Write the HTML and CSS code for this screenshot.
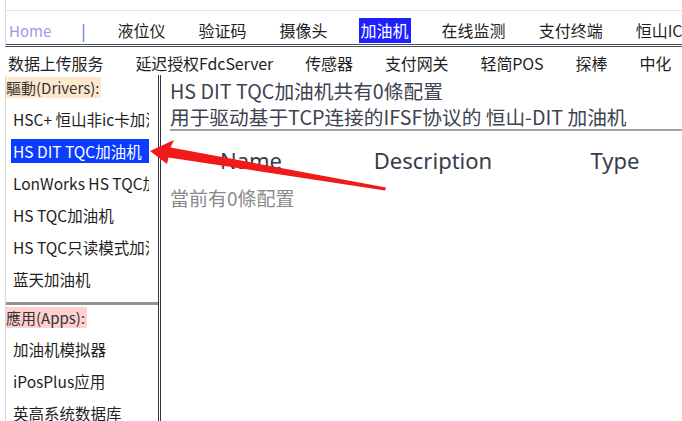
FILE: index.html
```html
<!DOCTYPE html>
<html lang="zh">
<head>
<meta charset="utf-8">
<title>加油机</title>
<link rel="stylesheet" href="styles.css">
</head>
<body>
<div class="page">
  <header class="top">
    <div class="top-strip"></div>
    <nav class="nav">
      <a class="nav-item home">Home</a>
      <span class="nav-item sep">|</span>
      <a class="nav-item">液位仪</a>
      <a class="nav-item">验证码</a>
      <a class="nav-item">摄像头</a>
      <a class="nav-item active">加油机</a>
      <a class="nav-item">在线监测</a>
      <a class="nav-item">支付终端</a>
      <a class="nav-item">恒山IC卡</a>
    </nav>
  </header>
  <nav class="subnav">
    <a class="sub-item">数据上传服务</a>
    <a class="sub-item">延迟授权FdcServer</a>
    <a class="sub-item">传感器</a>
    <a class="sub-item">支付网关</a>
    <a class="sub-item">轻简POS</a>
    <a class="sub-item">探棒</a>
    <a class="sub-item">中化</a>
  </nav>
  <div class="main">
    <aside class="sidebar">
      <section class="group">
        <div class="group-label drivers">驅動(Drivers):</div>
        <div class="side-item">HSC+ 恒山非ic卡加油机</div>
        <div class="side-item selected">HS DIT TQC加油机</div>
        <div class="side-item">LonWorks HS TQC加油机</div>
        <div class="side-item">HS TQC加油机</div>
        <div class="side-item">HS TQC只读模式加油机</div>
        <div class="side-item">蓝天加油机</div>
      </section>
      <section class="group apps-group">
        <div class="group-label apps">應用(Apps):</div>
        <div class="side-item">加油机模拟器</div>
        <div class="side-item">iPosPlus应用</div>
        <div class="side-item">英高系统数据库</div>
      </section>
    </aside>
    <section class="content">
      <div class="title">HS DIT TQC加油机共有0條配置</div>
      <div class="subtitle">用于驱动基于TCP连接的IFSF协议的 恒山-DIT 加油机</div>
      <div class="table-head">
        <div class="col">Name</div>
        <div class="col">Description</div>
        <div class="col">Type</div>
      </div>
      <div class="empty">當前有0條配置</div>
    </section>
  </div>
  <svg class="arrow" width="682" height="421" viewBox="0 0 682 421">
    <polygon points="150,151 174,140 170.5,147.5 386,187.5 385,190.5 168.5,157.5 167,164" fill="#f01a1a"/>
  </svg>
</div>
</body>
</html>
```

FILE: styles.css
```css
html, body {
  margin: 0;
  padding: 0;
  background: #ffffff;
}

body {
  font-family: "Noto Sans CJK SC", "Noto Sans", sans-serif;
  font-size: 16px;
  color: #222;
  overflow: hidden;
  width: 682px;
  height: 421px;
}

.page {
  position: relative;
  width: 682px;
  height: 421px;
  display: flex;
  flex-direction: column;
}

.top {
  margin-left: 5px;
  border-left: 1px solid #dcdcdc;
  border-bottom: 3px double #4a4f57;
}

.top-strip {
  height: 10px;
  border-bottom: 1px solid #e3e1f5;
}

.nav {
  display: flex;
  gap: 33px;
  padding: 7px 0 1px 3px;
  white-space: nowrap;
}

.nav-item {
  line-height: 25px;
  color: #1e1e1e;
}

.nav-item.home {
  color: #9c99ee;
  font-size: 15px;
  margin-right: -3px;
}

.nav-item.sep {
  color: #3b6fd6;
  margin-right: -1px;
}

.nav-item.active {
  background: #1f1fff;
  color: #ffffff;
  padding: 0 2px;
  margin: 0 -2px;
}

.subnav {
  display: flex;
  gap: 32px;
  padding: 4px 0 0 8px;
  height: 24px;
  line-height: 24px;
  white-space: nowrap;
  color: #1e1e1e;
}

.sub-item {
  letter-spacing: -0.1px;
}

.main {
  flex: 1;
  display: flex;
  min-height: 0;
}

.sidebar {
  margin-left: 5px;
  width: 152px;
  flex: none;
  border-left: 1px solid #d8d8d8;
  border-right: 3px double #2f3640;
  display: flex;
  flex-direction: column;
}

.group {
  padding-bottom: 3px;
}

.apps-group {
  border-top: 3px solid #8f959c;
}

.group-label {
  display: inline-block;
  line-height: 21px;
  font-size: 15px;
  color: #333;
  margin-bottom: 9px;
}

.group-label.drivers {
  background: #fde8cd;
  padding-right: 2px;
}

.group-label.apps {
  background: #ffd0d0;
  padding-right: 2px;
}

.side-item {
  width: 136px;
  margin-left: 5px;
  padding-left: 2px;
  line-height: 24px;
  margin-bottom: 8px;
  white-space: nowrap;
  overflow: hidden;
  font-size: 15.5px;
  color: #1e1e1e;
}

.side-item.selected {
  background: #0b3cff;
  color: #ffffff;
}

.content {
  flex: 1;
  padding: 3px 0 0 9px;
  min-width: 0;
  color: #3d4350;
}

.title {
  font-size: 19.7px;
  line-height: 26px;
  white-space: nowrap;
}

.subtitle {
  font-size: 19.7px;
  line-height: 25px;
  white-space: nowrap;
  border-bottom: 2px solid #a3a3a3;
}

.table-head {
  display: grid;
  grid-template-columns: 162px 202px 162px;
  margin-top: 14px;
  font-family: "Noto Sans", "Noto Sans CJK SC", sans-serif;
  font-size: 22px;
  line-height: 30px;
  color: #343c4b;
}

.col {
  text-align: center;
}

.empty {
  margin-top: 10px;
  line-height: 26px;
  font-size: 19px;
  color: #8a8a8a;
}

.arrow {
  position: absolute;
  left: 0;
  top: 0;
  pointer-events: none;
}
```
